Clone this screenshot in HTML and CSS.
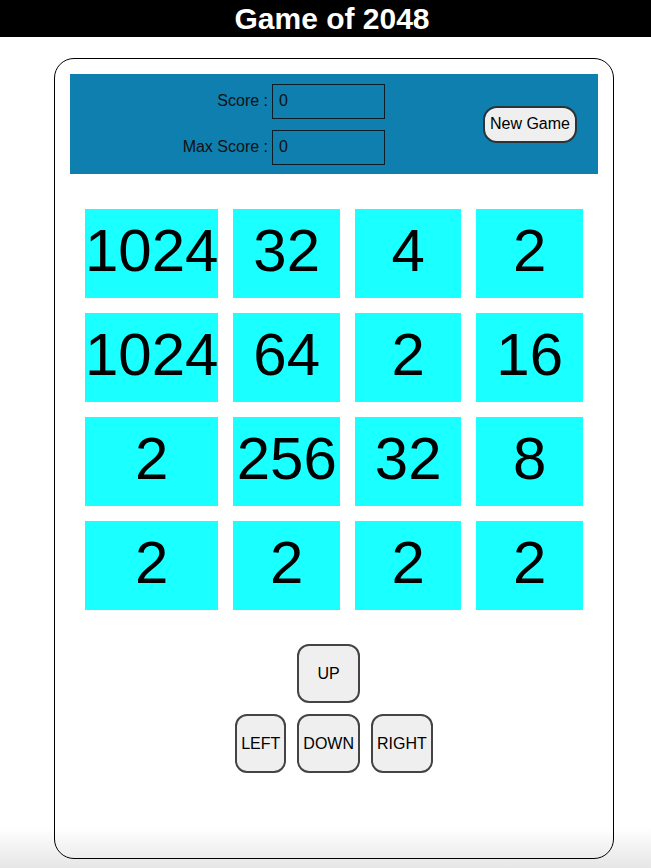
FILE: index.html
```html
<!DOCTYPE html>
<html lang="en">
<head>
<meta charset="utf-8">
<title>Game of 2048</title>
<link rel="stylesheet" href="styles.css">
</head>
<body>
<h1 class="header">Game of 2048</h1>
<div class="card">
  <div class="panel">
    <div class="scores">
      <label class="label" for="score">Score :</label>
      <input class="field" id="score" type="text" value="0">
      <label class="label" for="max">Max Score :</label>
      <input class="field" id="max" type="text" value="0">
    </div>
    <button class="new-game">New Game</button>
  </div>
  <div class="board">
    <div class="tile">1024</div><div class="tile">32</div><div class="tile">4</div><div class="tile">2</div>
    <div class="tile">1024</div><div class="tile">64</div><div class="tile">2</div><div class="tile">16</div>
    <div class="tile">2</div><div class="tile">256</div><div class="tile">32</div><div class="tile">8</div>
    <div class="tile">2</div><div class="tile">2</div><div class="tile">2</div><div class="tile">2</div>
  </div>
  <div class="controls">
    <button class="ctrl up">UP</button>
    <button class="ctrl left">LEFT</button>
    <button class="ctrl down">DOWN</button>
    <button class="ctrl right">RIGHT</button>
  </div>
</div>
</body>
</html>
```
FILE: styles.css
```css
html {
  min-height: 868px;
  background: linear-gradient(to bottom, #ffffff 0, #ffffff 828px, #e6e6e6 868px);
}
body {
  margin: 0;
  font-family: "Liberation Sans", Arial, sans-serif;
  color: #000;
}
.header {
  margin: 0;
  height: 37px;
  line-height: 37px;
  background: #000;
  color: #fff;
  font-size: 30px;
  font-weight: 700;
  text-align: center;
  padding-left: 13px;
}
.card {
  margin: 21px 0 0 54px;
  width: 528px;
  height: 769px;
  padding: 15px;
  border: 1px solid #000;
  border-radius: 20px;
}
.panel {
  height: 100px;
  background: #0e7fae;
  display: flex;
  align-items: center;
}
.scores {
  display: grid;
  grid-template-columns: 198px 113px;
  column-gap: 4px;
  row-gap: 11px;
  align-items: center;
}
.label {
  text-align: right;
  font-size: 16px;
  color: #111;
}
.field {
  box-sizing: border-box;
  width: 113px;
  height: 35px;
  margin: 0;
  border: 1px solid #0b1c26;
  background: transparent;
  padding: 0 6px;
  font: 16px "Liberation Sans", Arial, sans-serif;
  color: #111;
  outline: none;
}
.new-game {
  margin-left: auto;
  margin-right: 21px;
  height: 37px;
  padding: 0 5px;
  border: 2px solid #2c3338;
  border-radius: 14px;
  background: #efefef;
  font: 16px "Liberation Sans", Arial, sans-serif;
  color: #000;
}
.board {
  margin-top: 20px;
  padding: 15px;
  display: grid;
  grid-template-columns: repeat(4, 1fr);
  gap: 15px;
}
.tile {
  background: #1affff;
  height: 89px;
  line-height: 83px;
  text-align: center;
  font-size: 60px;
  white-space: nowrap;
}
.controls {
  margin-top: 19px;
  display: grid;
  grid-template-columns: auto auto auto;
  justify-content: center;
  column-gap: 11px;
  row-gap: 11px;
}
.ctrl {
  height: 59px;
  padding: 0 4px;
  border: 2px solid #444;
  border-radius: 12px;
  background: #efefef;
  font: 16px "Liberation Sans", Arial, sans-serif;
  color: #000;
}
.up {
  grid-column: 2;
  grid-row: 1;
}
.left {
  grid-column: 1;
  grid-row: 2;
}
.down {
  grid-column: 2;
  grid-row: 2;
}
.right {
  grid-column: 3;
  grid-row: 2;
}
```
